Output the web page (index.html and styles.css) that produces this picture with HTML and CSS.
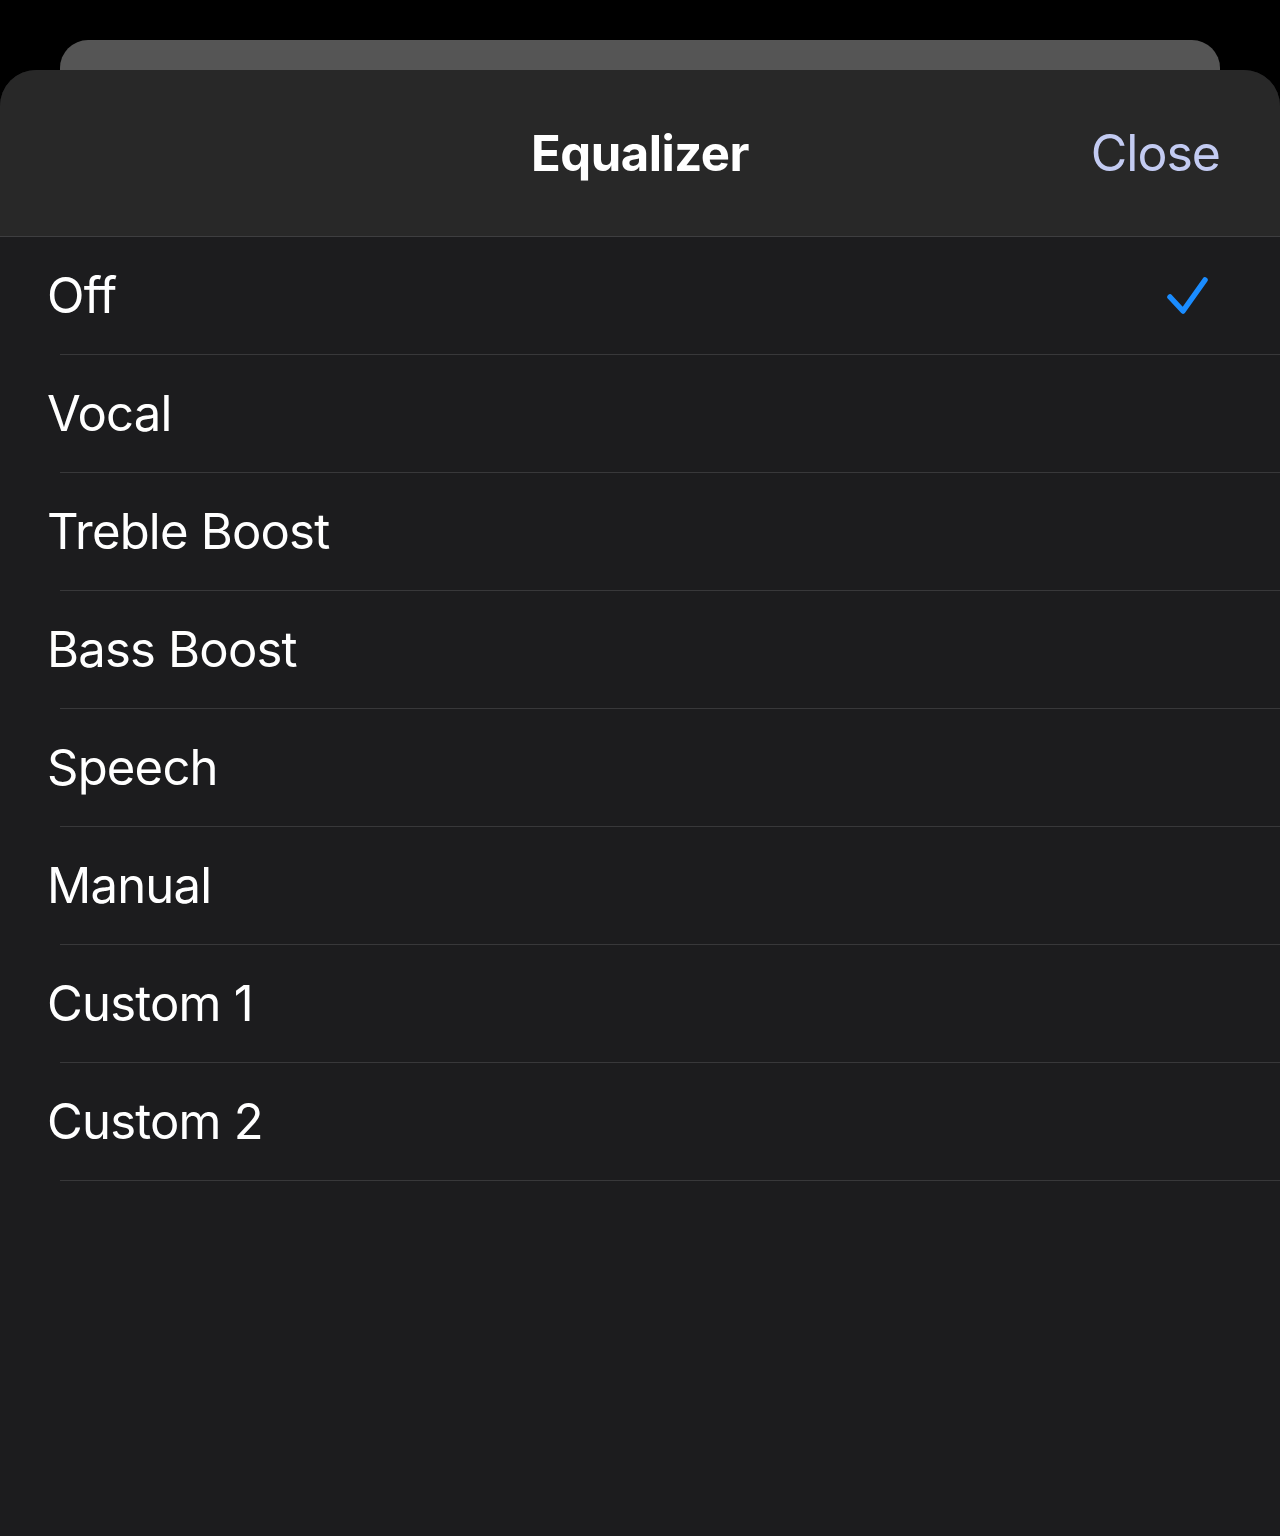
FILE: index.html
```html
<!DOCTYPE html>
<html lang="en">
<head>
<meta charset="utf-8">
<title>Equalizer</title>
<link rel="stylesheet" href="styles.css">
</head>
<body>
<div class="stack">
  <div class="back-card"></div>
  <div class="sheet">
    <header class="sheet-header">
      <span class="spacer"></span>
      <h1 class="title">Equalizer</h1>
      <button class="close">Close</button>
    </header>
    <ul class="options">
      <li class="option selected"><span class="label">Off</span>
        <svg class="check" width="44" height="40" viewBox="0 0 44 40" aria-hidden="true">
          <path d="M4 21 L17 35 L39 4" fill="none" stroke="#1a8cff" stroke-width="5.5" stroke-linecap="round" stroke-linejoin="round"/>
        </svg>
      </li>
      <li class="option"><span class="label">Vocal</span></li>
      <li class="option"><span class="label">Treble Boost</span></li>
      <li class="option"><span class="label">Bass Boost</span></li>
      <li class="option"><span class="label">Speech</span></li>
      <li class="option"><span class="label">Manual</span></li>
      <li class="option"><span class="label">Custom 1</span></li>
      <li class="option"><span class="label">Custom 2</span></li>
    </ul>
  </div>
</div>
</body>
</html>
```

FILE: styles.css
```css
* { box-sizing: border-box; }
html, body {
  margin: 0;
  padding: 0;
  background: #000;
  height: 1536px;
  overflow: hidden;
}
body {
  font-family: Inter, "Liberation Sans", sans-serif;
  font-variant-ligatures: none;
  color: #fff;
}
.stack {
  padding-top: 40px;
  display: flex;
  flex-direction: column;
  height: 1536px;
}
.back-card {
  height: 30px;
  margin: 0 60px;
  background: #555555;
  border-radius: 28px 28px 0 0;
  flex: none;
}
.sheet {
  flex: 1;
  background: #1c1c1e;
  border-radius: 36px 36px 0 0;
  overflow: hidden;
}
.sheet-header {
  height: 167px;
  background: #282828;
  border-bottom: 1px solid #3e3e40;
  display: grid;
  grid-template-columns: 1fr auto 1fr;
  align-items: center;
  padding: 0 60px;
}
.title {
  margin: 0;
  font-size: 49px;
  font-weight: 700;
  letter-spacing: -0.5px;
}
.close {
  justify-self: end;
  background: none;
  border: 0;
  padding: 0;
  font-family: inherit;
  font-size: 50px;
  font-weight: 400;
  letter-spacing: -1px;
  color: #c3cbf2;
}
.options {
  list-style: none;
  margin: 0;
  padding: 0;
}
.option {
  height: 118px;
  display: flex;
  align-items: center;
  justify-content: space-between;
  padding: 0 70px 1px 47px;
  background: linear-gradient(#38383a, #38383a) no-repeat 60px 100% / calc(100% - 60px) 1px;
}
.label {
  font-size: 49px;
  font-weight: 400;
  letter-spacing: -0.8px;
}
.check { display: block; margin-right: 0; }
```
